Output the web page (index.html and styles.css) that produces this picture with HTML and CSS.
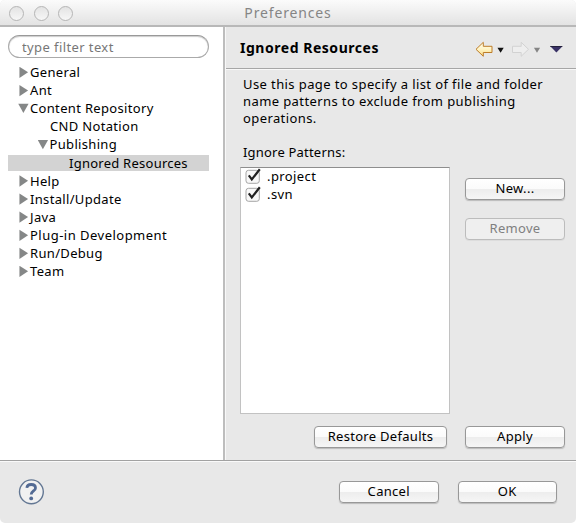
FILE: index.html
```html
<!DOCTYPE html>
<html lang="en">
<head>
<meta charset="utf-8">
<title>Preferences</title>
<link rel="stylesheet" href="styles.css">
</head>
<body>
<div class="window">
  <header class="titlebar">
    <div class="lights"><i></i><i></i><i></i></div>
    <h1>Preferences</h1>
  </header>
  <main class="content">
    <nav class="sidebar">
      <input class="filter" type="text" placeholder="type filter text">
      <ul class="tree">
        <li><i class="closed"></i><span>General</span></li>
        <li><i class="closed"></i><span>Ant</span></li>
        <li><i class="open"></i><span>Content Repository</span></li>
        <li class="leaf"><span>CND Notation</span></li>
        <li class="nested"><i class="open"></i><span>Publishing</span></li>
        <li class="deep selected"><span>Ignored Resources</span></li>
        <li><i class="closed"></i><span>Help</span></li>
        <li><i class="closed"></i><span>Install/Update</span></li>
        <li><i class="closed"></i><span>Java</span></li>
        <li class="loose"><i class="closed"></i><span>Plug-in Development</span></li>
        <li><i class="closed"></i><span>Run/Debug</span></li>
        <li><i class="closed"></i><span>Team</span></li>
      </ul>
    </nav>
    <section class="page">
      <div class="page-head">
        <h2>Ignored Resources</h2>
        <svg class="history" width="90" height="18" viewBox="0 0 90 18">
          <defs>
            <linearGradient id="gold" x1="0" y1="0" x2="0" y2="1"><stop offset="0" stop-color="#fffdf0"/><stop offset=".5" stop-color="#fff4c4"/><stop offset="1" stop-color="#f9d77c"/></linearGradient>
          </defs>
          <path d="M1 9.3 8.3 2.3V6.3H17V12.5H8.3V16.3Z" fill="url(#gold)" stroke="#bd7d2a" stroke-linejoin="round"/>
          <path d="M22.5 7.7h6.2l-3.1 5z" fill="#111"/>
          <path d="M53.5 9.3 46.2 2.3V6.3H37.5V12.5H46.2V16.3Z" fill="#eee" stroke="#d2d2d2" stroke-linejoin="round"/>
          <path d="M58.9 7.7h6.2l-3.1 5z" fill="#858585"/>
          <path d="M75.3 6.2h12.2l-6.1 6.4z" fill="#393266"/>
          <path d="M75.3 6.5h12" stroke="#24213c"/>
        </svg>
      </div>
      <div class="page-body">
        <p class="intro">Use this page to specify a list of file and folder<br>name patterns to exclude from publishing<br>operations.</p>
        <p class="label">Ignore Patterns:</p>
        <div class="patterns">
          <div class="list">
            <div class="item"><svg width="16" height="17" viewBox="0 0 16 17"><rect x="1" y="2.3" width="13.3" height="13" rx="2.5" fill="#f8f8f8" stroke="#a5a5a5"/><path d="M3.8 7.4 6.8 11.4 14.8 1.2" fill="none" stroke="#222" stroke-width="2.2"/></svg><span>.project</span></div>
            <div class="item"><svg width="16" height="17" viewBox="0 0 16 17"><rect x="1" y="2.3" width="13.3" height="13" rx="2.5" fill="#f8f8f8" stroke="#a5a5a5"/><path d="M3.8 7.4 6.8 11.4 14.8 1.2" fill="none" stroke="#222" stroke-width="2.2"/></svg><span>.svn</span></div>
          </div>
          <div class="side">
            <button>New...</button>
            <button disabled>Remove</button>
          </div>
        </div>
        <div class="page-actions">
          <button class="wide">Restore Defaults</button>
          <button>Apply</button>
        </div>
      </div>
    </section>
  </main>
  <footer class="footer">
    <svg width="26" height="26" viewBox="0 0 26 26"><circle cx="13.4" cy="12.8" r="11.9" fill="#f1f1f1" stroke="#637793" stroke-width="1.4"/><path d="M8.9 8.9C9 6.5 10.7 5.5 13.2 5.5c2.7 0 4.3 1.4 4.3 3.4 0 3-4.3 3.2-4.3 6.7" fill="none" stroke="#526a94" stroke-width="2.8"/><circle cx="13.2" cy="19.4" r="1.9" fill="#526a94"/></svg>
    <div class="footer-actions">
      <button>Cancel</button>
      <button>OK</button>
    </div>
  </footer>
</div>
</body>
</html>
```
FILE: styles.css
```css
* { box-sizing: border-box; }
html { background: #fff; }
body { margin: 0; font: 13px/17px "Noto Sans", sans-serif; color: #000; overflow: hidden; }
h1, h2, p, ul { margin: 0; padding: 0; }
.window { width: 576px; height: 522.5px; display: flex; flex-direction: column; background: #e8e8e8; border-radius: 5px; overflow: hidden; }
.titlebar { height: 27px; flex: none; display: grid; grid-template-columns: 1fr auto 1fr; align-items: center; border-bottom: 2px solid #b8b8b8; background: linear-gradient(#fbfbfb, #e3e3e3); }
.titlebar h1 { font-size: 14px; font-weight: 400; line-height: 20px; color: #858585; letter-spacing: .85px; padding-top: 1px; }
.lights { display: flex; gap: 9.2px; padding: 2px 0 0 9.4px; }
.lights i { width: 15px; height: 15px; border: 1.5px solid #b5b5b5; border-radius: 50%; background: linear-gradient(#e3e3e3, #f7f7f7); }
.content { height: 433px; flex: none; display: flex; }
.sidebar { width: 225px; flex: none; background: #fff; border-right: 2px solid #bdbdbd; padding: 8px 14px 0 8px; }
.filter { display: block; width: 201px; height: 23px; border: 1px solid #aaa; border-top-color: #999; border-radius: 12px; padding: 1px 13px 0; font: inherit; letter-spacing: .4px; outline: 0; background: #fff; box-shadow: inset 0 1px 1px #ccc; }
.filter::placeholder { color: #777; opacity: 1; }
.tree { list-style: none; padding-top: 5.5px; }
.tree li { height: 18.1px; display: flex; align-items: center; padding-left: 10px; white-space: nowrap; letter-spacing: .33px; }
.tree .loose { letter-spacing: .48px; }
.tree .leaf { padding-left: 42px; }
.tree .nested { padding-left: 29.5px; }
.tree .deep { padding-left: 61px; letter-spacing: .25px; }
.tree .selected { background: linear-gradient(#d3d3d3, #d3d3d3) 0 1px / 100% 16px no-repeat; }
.tree i { width: 12px; height: 12px; flex: none; background: #858787; }
.tree .closed { clip-path: polygon(12% 2%, 84% 48%, 12% 96%); }
.tree .open { clip-path: polygon(2% 8%, 88% 8%, 45% 86%); }
.page { flex: 1; border-left: 1px solid #f8f8f8; }
.page-head { height: 42px; display: flex; align-items: center; justify-content: space-between; padding: 0 12px 0 14px; border-bottom: 1px solid #a6a6a6; box-shadow: 0 1px #f8f8f8; }
.page-head h2 { font-size: 14px; line-height: 20px; letter-spacing: .53px; }
.history { margin-top: 2px; }
.page-body { padding: 7px 12px 0 14px; }
.intro { padding-left: 3px; white-space: nowrap; letter-spacing: .4px; }
.label { padding: 17px 0 6px 3px; letter-spacing: .2px; }
.patterns { display: flex; gap: 15px; }
.list { width: 210px; height: 247px; background: #fff; border: 1px solid #c2c2c2; border-top-color: #8e8e8e; padding-left: 4px; }
.item { height: 18px; display: flex; align-items: center; gap: 6px; letter-spacing: .4px; }
.item span { margin-top: -1px; }
.item svg { margin-top: -1px; }
.side { display: flex; flex-direction: column; gap: 18px; padding-top: 10.5px; }
button { width: 100px; height: 22px; padding: 0 0 1px; font: inherit; letter-spacing: .3px; color: #000; border: 1px solid #989898; border-radius: 4px; background: linear-gradient(#fff, #fbfbfb 48%, #ededed 52%, #f6f6f6); box-shadow: 0 1px 1px #bbb; }
button:disabled { color: #808080; border-color: #bcbcbc; background: #efefef; box-shadow: 0 1px #ddd; }
.page-actions { display: flex; justify-content: flex-end; gap: 18px; padding-top: 12px; }
.page-actions .wide { width: 133px; }
.footer { flex: 1; display: flex; justify-content: space-between; border-top: 1px solid #a2a2a2; box-shadow: inset 0 1px #fafafa; padding: 18px 19px 0 18px; }
.footer-actions { display: flex; gap: 19px; padding-top: 2px; }
.footer-actions button { width: 99.5px; }
```
